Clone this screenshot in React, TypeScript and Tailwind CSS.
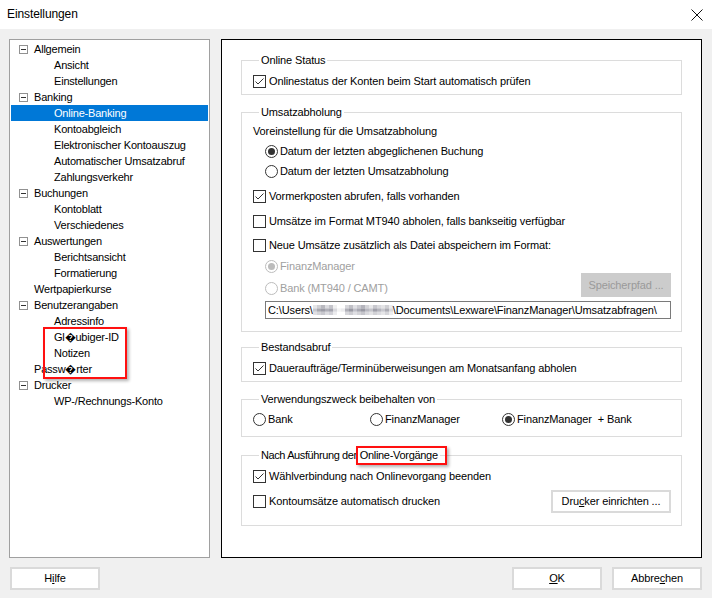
import React from "react";

type TreeItem = { t: string; l: 0 | 1; exp?: boolean; sel?: boolean };

const treeItems: TreeItem[] = [
  { t: "Allgemein", l: 0, exp: true },
  { t: "Ansicht", l: 1 },
  { t: "Einstellungen", l: 1 },
  { t: "Banking", l: 0, exp: true },
  { t: "Online-Banking", l: 1, sel: true },
  { t: "Kontoabgleich", l: 1 },
  { t: "Elektronischer Kontoauszug", l: 1 },
  { t: "Automatischer Umsatzabruf", l: 1 },
  { t: "Zahlungsverkehr", l: 1 },
  { t: "Buchungen", l: 0, exp: true },
  { t: "Kontoblatt", l: 1 },
  { t: "Verschiedenes", l: 1 },
  { t: "Auswertungen", l: 0, exp: true },
  { t: "Berichtsansicht", l: 1 },
  { t: "Formatierung", l: 1 },
  { t: "Wertpapierkurse", l: 0 },
  { t: "Benutzerangaben", l: 0, exp: true },
  { t: "Adressinfo", l: 1 },
  { t: "Gl\uFFFDubiger-ID", l: 1 },
  { t: "Notizen", l: 1 },
  { t: "Passw\uFFFDrter", l: 0 },
  { t: "Drucker", l: 0, exp: true },
  { t: "WP-/Rechnungs-Konto", l: 1 },
];

function Expander() {
  return (
    <svg width="9" height="9" viewBox="0 0 9 9" className="mr-[6px] shrink-0">
      <rect x="0.5" y="0.5" width="8" height="8" fill="#fff" stroke="#919191" />
      <line x1="2" y1="4.5" x2="7" y2="4.5" stroke="#333" />
    </svg>
  );
}

function Check({ checked }: { checked?: boolean }) {
  return (
    <svg width="13" height="13" viewBox="0 0 13 13" className="mr-[3px] shrink-0">
      <rect x="0.5" y="0.5" width="12" height="12" fill="#fff" stroke="#333" />
      {checked && (
        <polyline points="2.5,6.5 5,9 10.5,3.5" fill="none" stroke="#333" strokeWidth="1" />
      )}
    </svg>
  );
}

function Radio({ checked, disabled }: { checked?: boolean; disabled?: boolean }) {
  const c = disabled ? "#bcbcbc" : "#333";
  return (
    <svg width="13" height="13" viewBox="0 0 13 13" className="mr-[2px] shrink-0">
      <circle cx="6.5" cy="6.5" r="6" fill="#fff" stroke={c} />
      {checked && <circle cx="6.5" cy="6.5" r="3.5" fill={c} />}
    </svg>
  );
}

const mosaic: string[][] = [
  ["#e6e6e8", "#d0d0d4", "#b8b8be", "#dcdce0", "#c4c4ca", "#f0f0f0", "#ffffff", "#ffffff", "#d8d8dc", "#c0c0c6", "#e0e0e4", "#cacad0", "#b4b4bc", "#d4d4d8", "#e8e8ea", "#c8c8ce", "#dadade", "#e4e4e6", "#d0d0d4", "#ececee"],
  ["#c8c8ce", "#a8a8b0", "#9c9ca6", "#b0b0b8", "#a4a4ae", "#d8d8dc", "#f4f4f4", "#ececee", "#b0b0b8", "#9a9aa4", "#c0c0c8", "#a8a8b2", "#9898a2", "#b8b8c0", "#c4c4ca", "#a0a0aa", "#b4b4bc", "#c8c8ce", "#acacb4", "#d8d8dc"],
  ["#e0e0e4", "#d4d4d8", "#c8c8ce", "#dcdce0", "#d0d0d6", "#ececee", "#ffffff", "#ffffff", "#d8d8dc", "#cdcdd2", "#e0e0e4", "#d4d4d8", "#c6c6cc", "#dadade", "#e4e4e6", "#d2d2d6", "#dcdce0", "#e6e6e8", "#d6d6da", "#eeeeef"],
];

function Mosaic() {
  return (
    <svg width="80" height="10" viewBox="0 0 80 10" className="shrink-0">
      {mosaic.map((row, r) =>
        row.map((c, i) => <rect key={`${r}-${i}`} x={i * 4} y={r * 3.4} width="4" height="3.4" fill={c} />)
      )}
    </svg>
  );
}

function Btn({ children, w }: { children: React.ReactNode; w: string }) {
  return (
    <div className={`${w} flex h-[23px] items-center justify-center border-2 border-[#dadada] bg-white`}>
      {children}
    </div>
  );
}

export default function App() {
  return (
    <div className="flex h-[598px] w-[712px] flex-col bg-[#f0f0f0] font-['Liberation_Sans',Arial,sans-serif] text-[11px] leading-[15px] tracking-[-0.12px] text-black">
      {/* Title bar */}
      <div className="flex h-[29px] shrink-0 items-center justify-between bg-white pl-[7px] pr-[9px]">
        <span className="text-[12px] tracking-[-0.1px]">Einstellungen</span>
        <svg width="12" height="12" viewBox="0 0 12 12">
          <line x1="0.5" y1="0.5" x2="11.5" y2="11.5" stroke="#111" strokeWidth="1" />
          <line x1="11.5" y1="0.5" x2="0.5" y2="11.5" stroke="#111" strokeWidth="1" />
        </svg>
      </div>

      {/* Panels */}
      <div className="mt-[10px] flex h-[519px] pl-[9px] pr-[10px]">
        {/* Tree */}
        <div className="relative h-full w-[201px] shrink-0 border border-[#a0a0a0] bg-white px-[1px] pt-[1px] tracking-[-0.2px]">
          {treeItems.map((it, i) => (
            <div
              key={i}
              className={`flex h-[16px] items-center whitespace-nowrap ${
                it.sel ? "bg-[#0078d7] text-white" : ""
              } ${it.l === 1 ? "pl-[43px]" : it.exp ? "pl-[8px]" : "pl-[23px]"}`}
            >
              {it.exp && <Expander />}
              <span>{it.t}</span>
            </div>
          ))}
          <div className="absolute left-[33px] top-[287px] h-[52px] w-[84px] border-2 border-[#ff1010] shadow-[2px_2px_3px_rgba(0,0,0,0.3)]" />
        </div>

        {/* Right panel */}
        <div className="ml-[11px] flex h-full w-[481px] shrink-0 flex-col border border-black bg-white px-[19px]">
          {/* Online Status */}
          <fieldset className="mt-[13px] border border-[#dcdcdc] pb-[5px] pl-[11px] pr-[10px] pt-[6px]">
            <legend className="ml-[6px] px-[2px] leading-[15px]">Online Status</legend>
            <div className="flex h-[15px] items-center">
              <Check checked />
              <span>Onlinestatus der Konten beim Start automatisch prüfen</span>
            </div>
          </fieldset>

          {/* Umsatzabholung */}
          <fieldset className="mt-[10px] border border-[#dcdcdc] pb-[12px] pl-[11px] pr-[10px] pt-[2px]">
            <legend className="ml-[6px] px-[2px] leading-[15px]">Umsatzabholung</legend>
            <div className="flex h-[19px] items-center">Voreinstellung für die Umsatzabholung</div>
            <div className="ml-[12px] flex h-[20px] items-center">
              <Radio checked />
              <span>Datum der letzten abgeglichenen Buchung</span>
            </div>
            <div className="ml-[12px] flex h-[21px] items-center">
              <Radio />
              <span>Datum der letzten Umsatzabholung</span>
            </div>
            <div className="mt-[4px] flex h-[21px] items-center">
              <Check checked />
              <span>Vormerkposten abrufen, falls vorhanden</span>
            </div>
            <div className="mt-[2px] flex h-[24px] items-center">
              <Check />
              <span>Umsätze im Format MT940 abholen, falls bankseitig verfügbar</span>
            </div>
            <div className="flex h-[24px] items-center">
              <Check />
              <span>Neue Umsätze zusätzlich als Datei abspeichern im Format:</span>
            </div>
            <div className="flex h-[44px] justify-between">
              <div className="ml-[12px] flex flex-col text-[#a0a0a0]">
                <div className="flex h-[18px] items-center">
                  <Radio checked disabled />
                  <span>FinanzManager</span>
                </div>
                <div className="flex h-[26px] items-center">
                  <Radio disabled />
                  <span>Bank (MT940 / CAMT)</span>
                </div>
              </div>
              <div className="mb-[4px] flex h-[24px] w-[90px] items-center justify-center self-end bg-[#cccccc] text-[#9a9a9a]">
                Speicherpfad ...
              </div>
            </div>
            <div className="ml-[12px] flex h-[18px] items-center whitespace-nowrap border border-[#7a7a7a] pl-[2px]">
              <span>{"C:\\Users\\"}</span>
              <Mosaic />
              <span>{"\\Documents\\Lexware\\FinanzManager\\Umsatzabfragen\\"}</span>
            </div>
          </fieldset>

          {/* Bestandsabruf */}
          <fieldset className="mt-[8px] border border-[#dcdcdc] pb-[3px] pl-[11px] pr-[10px] pt-[3px]">
            <legend className="ml-[6px] px-[2px] leading-[15px]">Bestandsabruf</legend>
            <div className="flex h-[20px] items-center">
              <Check checked />
              <span>Daueraufträge/Terminüberweisungen am Monatsanfang abholen</span>
            </div>
          </fieldset>

          {/* Verwendungszweck */}
          <fieldset className="mt-[10px] border border-[#dcdcdc] pb-[7px] pl-[11px] pr-[10px] pt-[2px]">
            <legend className="ml-[6px] px-[2px] leading-[15px]">Verwendungszweck beibehalten von</legend>
            <div className="flex h-[20px] items-center">
              <div className="flex w-[117px] items-center">
                <Radio />
                <span>Bank</span>
              </div>
              <div className="flex w-[132px] items-center">
                <Radio />
                <span>FinanzManager</span>
              </div>
              <div className="flex items-center">
                <Radio checked />
                <span className="whitespace-pre">FinanzManager  + Bank</span>
              </div>
            </div>
          </fieldset>

          {/* Nach Ausführung */}
          <fieldset className="mt-[11px] border border-[#dcdcdc] pb-[12px] pl-[11px] pr-[10px] pt-[3px]">
            <legend className="ml-[6px] px-[2px] leading-[15px]">
              <span className="tracking-[-0.4px]">Nach Ausführung der</span>{" "}
              <span className="relative tracking-[-0.3px]">
                Online-Vorgänge
                <span className="absolute -bottom-[4px] -left-[4px] -right-[9px] -top-[3px] border-2 border-[#ff1010] shadow-[2px_2px_3px_rgba(0,0,0,0.3)]" />
              </span>
            </legend>
            <div className="flex h-[20px] items-center">
              <Check checked />
              <span>Wählverbindung nach Onlinevorgang beenden</span>
            </div>
            <div className="mt-[3px] flex h-[24px] items-center justify-between">
              <div className="flex items-center">
                <Check />
                <span>Kontoumsätze automatisch drucken</span>
              </div>
              <Btn w="w-[120px]">
                <span>
                  Dru<span className="underline">c</span>ker einrichten ...
                </span>
              </Btn>
            </div>
          </fieldset>
        </div>
      </div>

      {/* Bottom buttons */}
      <div className="mt-[9px] flex pl-[10px] pr-[10px]">
        <Btn w="w-[90px]">
          <span>
            H<span className="underline">i</span>lfe
          </span>
        </Btn>
        <div className="flex-1" />
        <Btn w="w-[90px]">
          <span>
            <span className="underline">O</span>K
          </span>
        </Btn>
        <div className="w-[10px]" />
        <Btn w="w-[90px]">
          <span>
            Abbre<span className="underline">c</span>hen
          </span>
        </Btn>
      </div>
    </div>
  );
}
